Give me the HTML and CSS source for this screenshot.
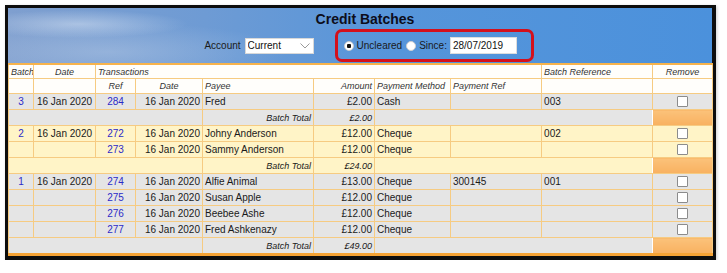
FILE: index.html
```html
<!DOCTYPE html>
<html lang="en">
<head>
    <meta charset="UTF-8">
    <title>Credit Batches</title>
    <link rel="stylesheet" href="styles.css">
</head>
<body>
    <div class="frame">
        <div class="sky">
            <h1 class="title">Credit Batches</h1>
            <div class="controls">
                <label class="account">Account
                    <span class="select-wrap">
                        <select><option>Current</option></select>
                        <svg class="chev" width="10" height="6" viewBox="0 0 10 6"><polyline points="0.5,0.5 5,5 9.5,0.5" fill="none" stroke="#9a9a9a" stroke-width="1"/></svg>
                    </span>
                </label>
                <div class="filter">
                    <input type="radio" name="show" checked>
                    <span class="opt">Uncleared</span>
                    <input type="radio" name="show">
                    <span class="opt">Since:</span>
                    <input type="text" class="since" value="28/07/2019">
                </div>
            </div>
        </div>

        <table class="batches">
            <colgroup>
                <col style="width:25px"><col style="width:62px"><col style="width:40px"><col style="width:67px"><col style="width:111px">
                <col style="width:61px"><col style="width:76px"><col style="width:91px"><col style="width:111px"><col style="width:60px">
            </colgroup>
            <thead>
                <tr>
                    <th class="l">Batch</th>
                    <th>Date</th>
                    <th class="l" colspan="6">Transactions</th>
                    <th class="l">Batch Reference</th>
                    <th>Remove</th>
                </tr>
                <tr class="sub">
                    <th></th>
                    <th></th>
                    <th>Ref</th>
                    <th>Date</th>
                    <th class="l">Payee</th>
                    <th class="r">Amount</th>
                    <th class="l">Payment Method</th>
                    <th class="l">Payment Ref</th>
                    <th></th>
                    <th></th>
                </tr>
            </thead>
            <tbody class="grey">
                <tr>
                    <td class="c"><a href="#">3</a></td><td class="c">16 Jan 2020</td><td class="c"><a href="#">284</a></td><td class="r">16 Jan 2020</td>
                    <td>Fred</td><td class="r">£2.00</td><td>Cash</td><td></td><td>003</td><td class="c"><input type="checkbox"></td>
                </tr>
                <tr class="total">
                    <td colspan="4"></td><td class="r">Batch Total</td><td class="r">£2.00</td><td colspan="3"></td><td class="flag"></td>
                </tr>
            </tbody>
            <tbody class="yellow">
                <tr>
                    <td class="c"><a href="#">2</a></td><td class="c">16 Jan 2020</td><td class="c"><a href="#">272</a></td><td class="r">16 Jan 2020</td>
                    <td>Johny Anderson</td><td class="r">£12.00</td><td>Cheque</td><td></td><td>002</td><td class="c"><input type="checkbox"></td>
                </tr>
                <tr>
                    <td></td><td></td><td class="c"><a href="#">273</a></td><td class="r">16 Jan 2020</td>
                    <td>Sammy Anderson</td><td class="r">£12.00</td><td>Cheque</td><td></td><td></td><td class="c"><input type="checkbox"></td>
                </tr>
                <tr class="total">
                    <td colspan="4"></td><td class="r">Batch Total</td><td class="r">£24.00</td><td colspan="3"></td><td class="flag"></td>
                </tr>
            </tbody>
            <tbody class="grey">
                <tr>
                    <td class="c"><a href="#">1</a></td><td class="c">16 Jan 2020</td><td class="c"><a href="#">274</a></td><td class="r">16 Jan 2020</td>
                    <td>Alfie Animal</td><td class="r">£13.00</td><td>Cheque</td><td>300145</td><td>001</td><td class="c"><input type="checkbox"></td>
                </tr>
                <tr>
                    <td></td><td></td><td class="c"><a href="#">275</a></td><td class="r">16 Jan 2020</td>
                    <td>Susan Apple</td><td class="r">£12.00</td><td>Cheque</td><td></td><td></td><td class="c"><input type="checkbox"></td>
                </tr>
                <tr>
                    <td></td><td></td><td class="c"><a href="#">276</a></td><td class="r">16 Jan 2020</td>
                    <td>Beebee Ashe</td><td class="r">£12.00</td><td>Cheque</td><td></td><td></td><td class="c"><input type="checkbox"></td>
                </tr>
                <tr>
                    <td></td><td></td><td class="c"><a href="#">277</a></td><td class="r">16 Jan 2020</td>
                    <td>Fred Ashkenazy</td><td class="r">£12.00</td><td>Cheque</td><td></td><td></td><td class="c"><input type="checkbox"></td>
                </tr>
                <tr class="total">
                    <td colspan="4"></td><td class="r">Batch Total</td><td class="r">£49.00</td><td colspan="3"></td><td class="flag"></td>
                </tr>
            </tbody>
        </table>
    </div>
</body>
</html>
```

FILE: styles.css
```css
body {
    margin: 0;
    background: #fff;
    font-family: "Liberation Sans", Arial, sans-serif;
    color: #1a1a1a;
}

.frame {
    width: 704px;
    margin: 5px 0 0 5px;
    border: solid #0d0d0d;
    border-width: 3px 4px 4px 3px;
    box-shadow: 1px 1px 3px rgba(0, 0, 0, 0.2);
}

/* header with the sky picture */
.sky {
    height: 55px;
    box-sizing: border-box;
    padding-top: 3px;
    background:
        radial-gradient(ellipse 110px 14px at 70px 16px, rgba(230, 238, 248, 0.45), transparent),
        radial-gradient(ellipse 180px 30px at 100px 44px, rgba(205, 218, 236, 0.35), transparent),
        linear-gradient(90deg, #7f9fcf 0%, #6e9bd4 28%, #5695da 55%, #4b91dc 100%);
}

.title {
    margin: 0;
    padding-left: 10px;
    font-size: 14px;
    line-height: 16px;
    font-weight: bold;
    text-align: center;
    color: #0d0d1a;
}

.controls {
    display: flex;
    justify-content: center;
    align-items: center;
    gap: 21px;
    margin-top: 2px;
    padding-left: 18px;
    font-size: 10px;
}

.account {
    display: flex;
    align-items: center;
    gap: 4px;
}

.select-wrap {
    position: relative;
    display: inline-block;
}

.select-wrap select {
    appearance: none;
    width: 69px;
    height: 16px;
    padding: 0 0 0 2px;
    border: 1px solid #d8d8d8;
    border-radius: 0;
    background: #fff;
    font-family: inherit;
    font-size: 10px;
    color: #111;
}

.chev {
    position: absolute;
    right: 4px;
    top: 5px;
}

.filter {
    display: flex;
    align-items: center;
    width: 199px;
    height: 33px;
    box-sizing: border-box;
    padding-left: 6px;
    border: 3px solid #d4101c;
    border-radius: 7px;
}

.filter input[type="radio"] {
    appearance: none;
    width: 10px;
    height: 10px;
    margin: 0;
    border-radius: 50%;
    background: #fff;
    border: 1px solid #d0d0d0;
    box-sizing: border-box;
}

.filter input[type="radio"]:checked {
    background: radial-gradient(circle, #111 0 2px, #fff 2.5px);
}

.opt {
    margin: 0 4px 0 3px;
}

.since {
    width: 67px;
    height: 17px;
    box-sizing: border-box;
    margin-left: -1px;
    padding: 0 2px;
    border: 1px solid #ddd;
    font-family: inherit;
    font-size: 10px;
    color: #111;
}

/* batches table */
.batches {
    width: 704px;
    table-layout: fixed;
    border-collapse: collapse;
    font-size: 10px;
    border-top: 2px solid #f7b34c;
    border-bottom: 3px solid #f6a334;
}

.batches th,
.batches td {
    border: 1px solid #f6cb82;
    padding: 0 2px;
    white-space: nowrap;
    overflow: hidden;
}

.batches th {
    height: 13px;
    background: #fffefb;
    font-weight: normal;
    font-style: italic;
    font-size: 9px;
    color: #333;
    text-align: center;
}

.batches .sub th {
    height: 14px;
}

.batches td {
    height: 15px;
    text-align: left;
}

.batches .l { text-align: left; }
.batches .r { text-align: right; }
.batches .c { text-align: center; }

.grey td { background: #e5e5e5; }
.yellow td { background: #fff4c7; }

.total td {
    height: 15px;
    font-style: italic;
    font-size: 9px;
}

.total td[colspan="3"] {
    border-right-color: transparent;
}

.batches .total .flag {
    background: linear-gradient(#fbc27a, #f8b160);
}

.batches a {
    color: #2b2bc8;
    text-decoration: none;
}

.batches input[type="checkbox"] {
    appearance: none;
    width: 11px;
    height: 11px;
    margin: 0;
    vertical-align: middle;
    border: 1px solid #8c8c8c;
    border-radius: 1px;
    background: #fff;
    box-sizing: border-box;
}
```
